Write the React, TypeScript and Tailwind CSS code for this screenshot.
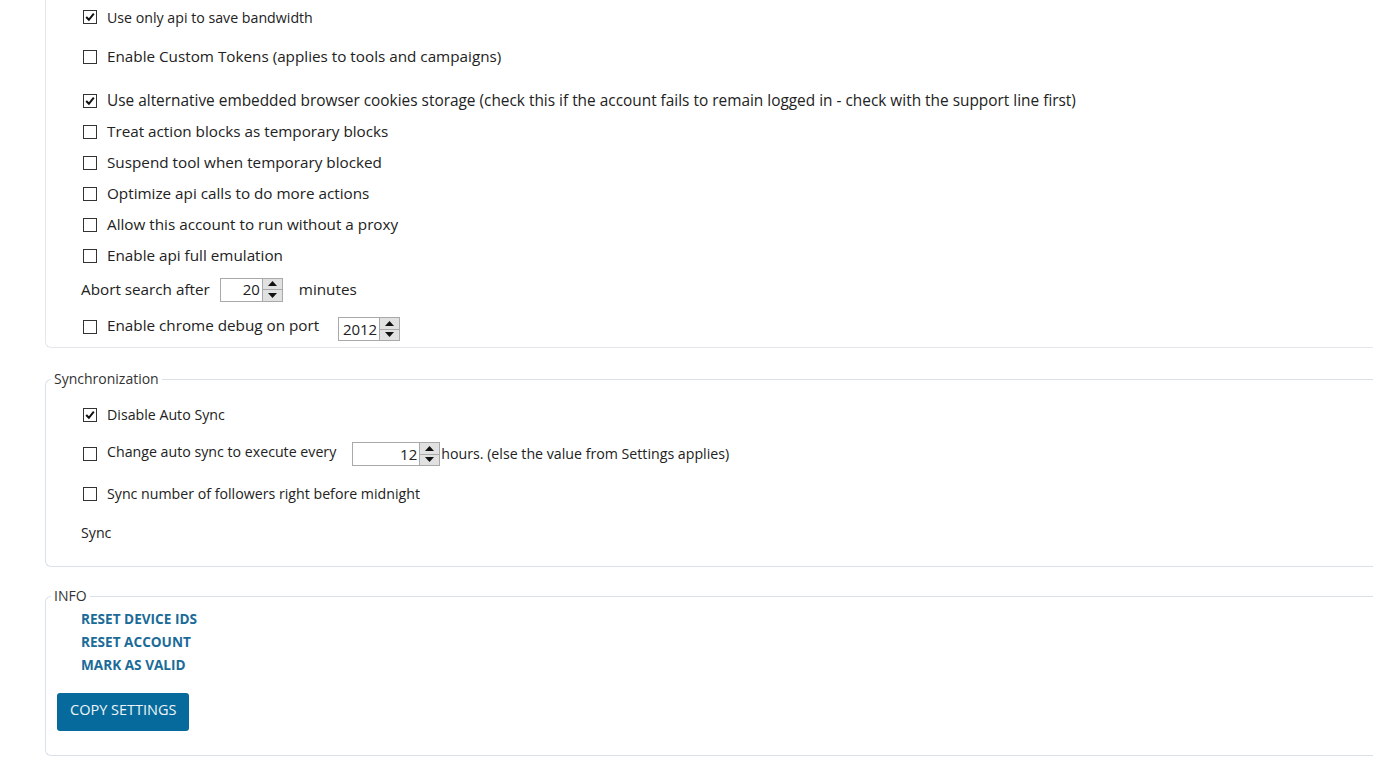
import React from 'react';

const FONT = { fontFamily: '"Open Sans", "Noto Sans", sans-serif' };

function Check({ checked }: { checked?: boolean }) {
  return (
    <span className="inline-flex h-[14px] w-[14px] shrink-0 items-center justify-center border border-[#333] bg-white">
      {checked && (
        <svg width="10" height="10" viewBox="0 0 10 10">
          <path d="M1.2 5 L3.9 7.8 L8.8 1.6" fill="none" stroke="#111" strokeWidth="2" />
        </svg>
      )}
    </span>
  );
}

function CheckRow({ label, checked, className = '' }: { label: string; checked?: boolean; className?: string }) {
  return (
    <div className={`flex items-center gap-[10px] pl-[37px] ${className}`}>
      <Check checked={checked} />
      <span>{label}</span>
    </div>
  );
}

function Spinner({ value, width }: { value: string; width: string }) {
  return (
    <span className={`inline-flex h-[24px] items-stretch border border-[#a9a9a9] bg-white ${width}`}>
      <span className="flex flex-1 items-center justify-end pr-[2px] text-[15px] leading-none text-[#222]">{value}</span>
      <span className="flex w-[20px] flex-col border-l border-[#a9a9a9] bg-[#e1e1e1]">
        <span className="flex flex-1 items-center justify-center border-b border-[#a9a9a9]">
          <svg width="9" height="5" viewBox="0 0 9 5"><path d="M0 5 L4.5 0 L9 5 Z" fill="#111" /></svg>
        </span>
        <span className="flex flex-1 items-center justify-center">
          <svg width="9" height="5" viewBox="0 0 9 5"><path d="M0 0 L4.5 5 L9 0 Z" fill="#111" /></svg>
        </span>
      </span>
    </span>
  );
}

export default function App() {
  return (
    <div className="h-[776px] w-full overflow-hidden bg-white text-[15.25px] text-[#222]" style={FONT}>
      <div className="ml-[45px]">
        {/* advanced options panel (top cut off) */}
        <div className="rounded-bl-[6px] border-b border-l border-[#e3e7eb] pb-[1px]">
          <div className="flex h-[35px] flex-col justify-center text-[14.2px]">
            <CheckRow checked label="Use only api to save bandwidth" />
          </div>
          <div className="flex h-[43px] flex-col justify-center">
            <CheckRow label="Enable Custom Tokens (applies to tools and campaigns)" />
          </div>
          <div className="flex h-[38px] flex-col justify-start pt-[11px] text-[15.4px]">
            <CheckRow
              checked
              label="Use alternative embedded browser cookies storage (check this if the account fails to remain logged in - check with the support line first)"
            />
          </div>
          <div className="flex h-[31px] flex-col justify-center">
            <CheckRow label="Treat action blocks as temporary blocks" />
          </div>
          <div className="flex h-[31px] flex-col justify-center">
            <CheckRow label="Suspend tool when temporary blocked" />
          </div>
          <div className="flex h-[31px] flex-col justify-center">
            <CheckRow label="Optimize api calls to do more actions" />
          </div>
          <div className="flex h-[31px] flex-col justify-center">
            <CheckRow label="Allow this account to run without a proxy" />
          </div>
          <div className="flex h-[31px] flex-col justify-center">
            <CheckRow label="Enable api full emulation" />
          </div>
          <div className="flex h-[37px] items-center pl-[35px]">
            <span>Abort search after</span>
            <span className="ml-[10px]">
              <Spinner value="20" width="w-[63px]" />
            </span>
            <span className="ml-[16px]">minutes</span>
          </div>
          <div className="flex h-[38px] items-center gap-[10px] pl-[37px]">
            <Check />
            <span className="-mt-[4px]">Enable chrome debug on port</span>
            <span className="ml-[9px] mt-[4px]">
              <Spinner value="2012" width="w-[62px]" />
            </span>
          </div>
        </div>

        {/* Synchronization */}
        <fieldset className="mt-[22px] rounded-l-[6px] border-y border-l border-[#d9e2ea] pb-[15px] text-[14.2px]">
          <legend className="ml-[5px] px-[3px] text-[14px] leading-[18px] text-[#333]">Synchronization</legend>
          <div className="flex h-[47px] flex-col justify-start pt-[16px]">
            <CheckRow checked label="Disable Auto Sync" />
          </div>
          <div className="flex h-[38px] items-center gap-[10px] pl-[37px]">
            <Check />
            <span className="-mt-[4px]">Change auto sync to execute every</span>
            <span className="ml-[6px]">
              <Spinner value="12" width="w-[88px]" />
            </span>
            <span className="-ml-[9px]">hours. (else the value from Settings applies)</span>
          </div>
          <div className="flex h-[42px] flex-col justify-center">
            <CheckRow label="Sync number of followers right before midnight" />
          </div>
          <div className="flex h-[36px] items-center pl-[35px]">Sync</div>
        </fieldset>

        {/* INFO */}
        <fieldset className="mt-[20px] rounded-l-[6px] border-y border-l border-[#d9e2ea] pb-[24px]">
          <legend className="ml-[5px] px-[3px] text-[14px] leading-[18px] text-[#333]">INFO</legend>
          <div className="flex flex-col pl-[35px] pt-[2px] text-[13.6px] font-bold leading-[23px] text-[#1b6b99]">
            <a href="#">RESET DEVICE IDS</a>
            <a href="#">RESET ACCOUNT</a>
            <a href="#">MARK AS VALID</a>
          </div>
          <div className="ml-[11px] mt-[17px]">
            <button className="h-[38px] rounded-[3px] bg-[#066b9c] px-[13px] pb-[4px] text-[14.5px] text-[#f0f4f7]">
              COPY SETTINGS
            </button>
          </div>
        </fieldset>
      </div>
    </div>
  );
}
